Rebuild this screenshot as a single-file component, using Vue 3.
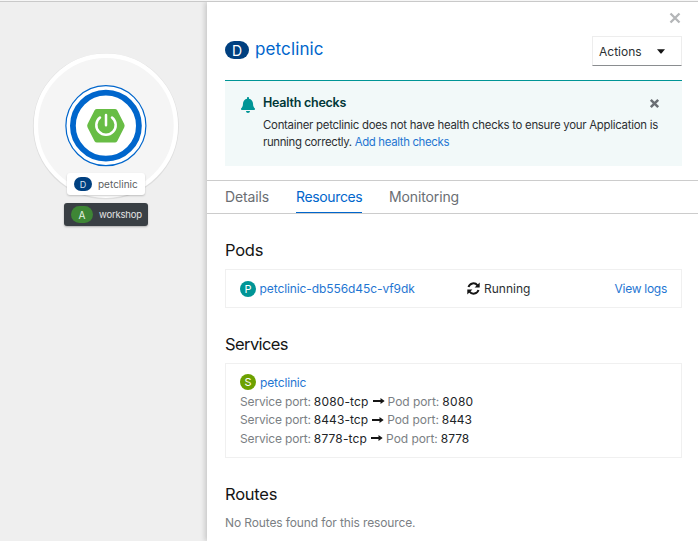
<script setup>
const ports = [
  { service: '8080-tcp', pod: '8080' },
  { service: '8443-tcp', pod: '8443' },
  { service: '8778-tcp', pod: '8778' },
]
</script>

<template>
  <div class="page">
    <aside class="canvas">
      <svg class="node" width="160" height="160" viewBox="0 0 160 160">
        <g transform="translate(-.1 .7)">
          <circle cx="80" cy="80.600" r="73" fill="#dedede" />
          <circle cx="80" cy="80" r="70" fill="#f5f5f5" stroke="#fff" stroke-width="4.400" />
          <circle cx="80" cy="80" r="40" fill="#fff" stroke="#0066cc" stroke-width="1.200" />
          <circle cx="80" cy="80" r="33" fill="#fff" stroke="#0066cc" stroke-width="5.800" />
          <path d="M71 63.200H89Q90.500 63.200 91.300 64.500L98.300 78.300Q99.200 80 98.300 81.700L91.300 95.500Q90.500 96.800 89 96.800H71Q69.500 96.800 68.700 95.500L61.700 81.700Q60.800 80 61.700 78.300L68.700 64.500Q69.500 63.200 71 63.200Z" fill="#68bd45" />
          <path d="M74.100 71.800A9.700 9.700 0 1 0 86.100 71.800M80.100 69.200V79.600" fill="none" stroke="#fff" stroke-width="2.500" stroke-linecap="round" />
        </g>
      </svg>
      <div class="label light"><span class="pill navy">D</span><span>petclinic</span></div>
      <div class="label dark"><span class="pill green">A</span><span class="l2">workshop</span></div>
    </aside>

    <main class="panel">
      <div class="closebar">
        <svg width="12" height="12" viewBox="0 0 12 12"><path d="M1.500 1.500L10.500 10.500M10.500 1.500L1.500 10.500" stroke="#b4b6b8" stroke-width="2.300" /></svg>
      </div>
      <header class="head">
        <span class="badge-d">D</span>
        <h1>petclinic</h1>
        <button class="actions"><span>Actions</span>
          <svg width="8" height="5" viewBox="0 0 8 5"><path d="M0 .3H8L4.600 4.300Q4 5 3.400 4.300Z" fill="#151515" /></svg>
        </button>
      </header>

      <section class="alert">
        <svg class="bell" width="14" height="16" viewBox="0 0 448 512"><path fill="#009596" d="M224 512c35.300 0 64-28.700 64-64H160c0 35.300 28.700 64 64 64zm215.400-149.700c-19.300-20.800-55.500-52-55.500-154.300 0-77.700-54.500-139.900-127.900-155.200V32c0-17.700-14.300-32-32-32s-32 14.300-32 32v20.800C118.600 68.100 64.100 130.300 64.100 208c0 102.300-36.200 133.500-55.500 154.300-6 6.500-8.700 14.200-8.600 21.700.1 16.400 13 32 32.100 32h383.800c19.100 0 32-15.600 32.100-32 .1-7.600-2.600-15.300-8.600-21.700z" /></svg>
        <div class="alert-body">
          <h2>Health checks</h2>
          <p>Container petclinic does not have health checks to ensure your Application is<br><span class="second">running correctly. <a>Add health checks</a></span></p>
        </div>
        <svg class="x" width="11" height="11" viewBox="0 0 11 11"><path d="M1.800 1.800L9.200 9.200M9.200 1.800L1.800 9.200" stroke="#6a6e73" stroke-width="2.500" /></svg>
      </section>

      <nav class="tabs">
        <a class="t1">Details</a><a class="t2 active">Resources</a><a class="t3">Monitoring</a>
      </nav>

      <h3 class="pods">Pods</h3>
      <div class="card pod">
        <span class="dot teal">P</span>
        <a class="podname">petclinic-db556d45c-vf9dk</a>
        <svg class="sync" width="13" height="13" viewBox="0 0 13 13"><g fill="none" stroke="#151515" stroke-width="2"><path d="M1.500 5A5.200 5.200 0 0 1 10.500 3.300" /><path d="M11.500 8A5.200 5.200 0 0 1 2.500 9.700" /></g><path fill="#151515" d="M12.700.4V5.500H7.600ZM.3 12.600V7.500H5.400Z" /></svg>
        <span class="running">Running</span>
        <a class="logs">View logs</a>
      </div>

      <h3 class="services">Services</h3>
      <div class="card service">
        <div class="svc"><span class="dot lime">S</span><a class="svcname">petclinic</a></div>
        <div v-for="p in ports" :key="p.pod" class="port">
          <span class="sp">Service port:</span><b class="tcp">{{ p.service }}</b>
          <svg width="12" height="8" viewBox="0 0 12 8"><path d="M0 3H7.500V1L11.700 4L7.500 7V5H0Z" fill="#151515" /></svg>
          <span class="pp">Pod port:</span><b class="num">{{ p.pod }}</b>
        </div>
      </div>

      <h3 class="routes">Routes</h3>
      <p class="none">No Routes found for this resource.</p>
    </main>
  </div>
</template>

<style>
body { margin: 0; overflow: hidden; }
</style>
<style scoped>
* { box-sizing: border-box; }
.page { width: 698px; height: 541px; display: flex; padding-top: 1px; background: linear-gradient(#f6f6f6 1px, #c9c9c9 1px, #c9c9c9 2px, #efefef 2px); font-family: Inter, "Open Sans", sans-serif; font-size: 12px; color: #2c2f32; white-space: nowrap; }
.canvas { width: 207px; padding: 45px 0 0 26px; display: flex; flex-direction: column; margin-top: -1px; }
.node { display: block; flex: none; }
.label { display: flex; align-items: center; border-radius: 3px; flex: none; font-size: 10px; z-index: 1; }
.light { margin: -32px 0 0 41px; width: 78px; height: 22px; padding-left: 7px; background: #fff; color: #5b5e61; box-shadow: 0 1px 2px #0003; }
.dark { margin: 8px 0 0 38px; width: 84px; height: 23px; padding-left: 7px; background: #393f44; color: #e4e4e4; box-shadow: 0 1px 2px #0004; }
.l2 { font-size: 9.5px; letter-spacing: -.18px; }
.pill { display: flex; align-items: center; justify-content: center; border-radius: 9px; flex: none; }
.navy { width: 18px; height: 14px; background: #004080; color: #d8e4f0; font-size: 9px; margin-right: 6px; }
.green { width: 22px; height: 17px; background: #3e8635; color: #e6f2e6; margin-right: 6px; }
.panel { width: 491px; margin-top: 1px; height: 539px; background: #fff; box-shadow: -2px 0 5px #0000002b; display: flex; flex-direction: column; clip-path: inset(0 0 0 -10px); }
.closebar { height: 34px; padding: 10px 17px 0 0; display: flex; justify-content: flex-end; }
.head { height: 44px; padding: 0 16px 0 18px; display: flex; }
.badge-d { width: 24px; height: 18px; margin-top: 5px; border-radius: 9px; background: #004080; color: #fff; font-size: 14px; display: flex; align-items: center; justify-content: center; }
h1 { margin: 0 0 0 6px; font-size: 17px; font-weight: 400; line-height: 27px; color: #0066cc; letter-spacing: .13px; }
.actions { margin-left: auto; width: 90px; height: 30px; padding: 0 16px 0 6px; background: #fff; border: 1px solid #ededed; border-bottom-color: #8a8d90; display: flex; align-items: center; justify-content: space-between; font: 12px Inter, sans-serif; color: #2c2f32; }
.alert { margin: 0 16px 0 18px; height: 86px; border-top: 1px solid #009596; background: #f2f9f9; display: flex; padding: 13px 22px 0 16px; }
.bell { margin-top: 3px; flex: none; }
.alert-body { margin-left: 8px; flex: 1; min-width: 0; }
h2 { margin: 0; font-size: 12.5px; line-height: 18px; font-weight: 600; color: #003737; letter-spacing: -.25px; }
p { margin: 0; }
.alert p { margin-top: 5px; font-size: 11.4px; line-height: 17px; letter-spacing: -.26px; }
.second { letter-spacing: -.34px; }
a { color: #1f76d2; }
.x { margin-top: 4px; flex: none; }
.tabs { margin-top: 14px; height: 34px; flex: none; border-top: 1px solid #ccc; border-bottom: 1px solid #ccc; padding-left: 18px; display: flex; font-size: 14px; line-height: 31px; }
.tabs a { color: #6a6e73; height: 32px; }
.t1 { width: 44px; margin-right: 27px; letter-spacing: -.12px; }
.t2 { width: 66px; margin-right: 27px; letter-spacing: -.36px; }
.t3 { letter-spacing: -.12px; }
.tabs .active { color: #0066cc; border-bottom: 1px solid #0066cc; }
h3 { margin: 0 0 0 18px; font-size: 16.5px; line-height: 20px; font-weight: 400; color: #151515; }
.pods { margin-top: 26px; letter-spacing: -.25px; }
.card { margin: 9px 16px 0 18px; border: 1px solid #f0f0f0; flex: none; }
.pod { height: 39px; padding: 0 14px; display: flex; align-items: center; }
.dot { width: 16px; height: 16px; border-radius: 50%; color: #fff; font-size: 11px; display: flex; align-items: center; justify-content: center; flex: none; }
.teal { background: #009596; }
.lime { background: #6ca100; }
.podname { width: 207.5px; margin-left: 3.5px; letter-spacing: -.09px; }
.running { margin-left: 4px; }
.logs { margin-left: auto; letter-spacing: -.28px; }
.services { margin-top: 26px; letter-spacing: -.6px; }
.service { height: 95px; padding: 10px 14px; }
.svc { display: flex; height: 18px; line-height: 18px; }
.svcname { margin-left: 4px; letter-spacing: -.15px; }
.port { display: flex; align-items: center; height: 18.6px; color: #7b7f84; }
.port b { font-weight: 400; color: #212427; margin-left: 3px; }
.sp { letter-spacing: -.16px; }
.tcp { letter-spacing: .15px; }
.port svg { margin: 0 3px 0 4px; }
.pp { letter-spacing: -.05px; }
.port:nth-child(2) .num { letter-spacing: .3px; }
.port:nth-child(3) .tcp { letter-spacing: .05px; }
.port:nth-child(3) .num { letter-spacing: -.1px; }
.routes { margin-top: 26px; letter-spacing: -.25px; }
.none { margin: 10px 0 0 18px; line-height: 18px; color: #7b7f84; letter-spacing: -.12px; }
</style>
